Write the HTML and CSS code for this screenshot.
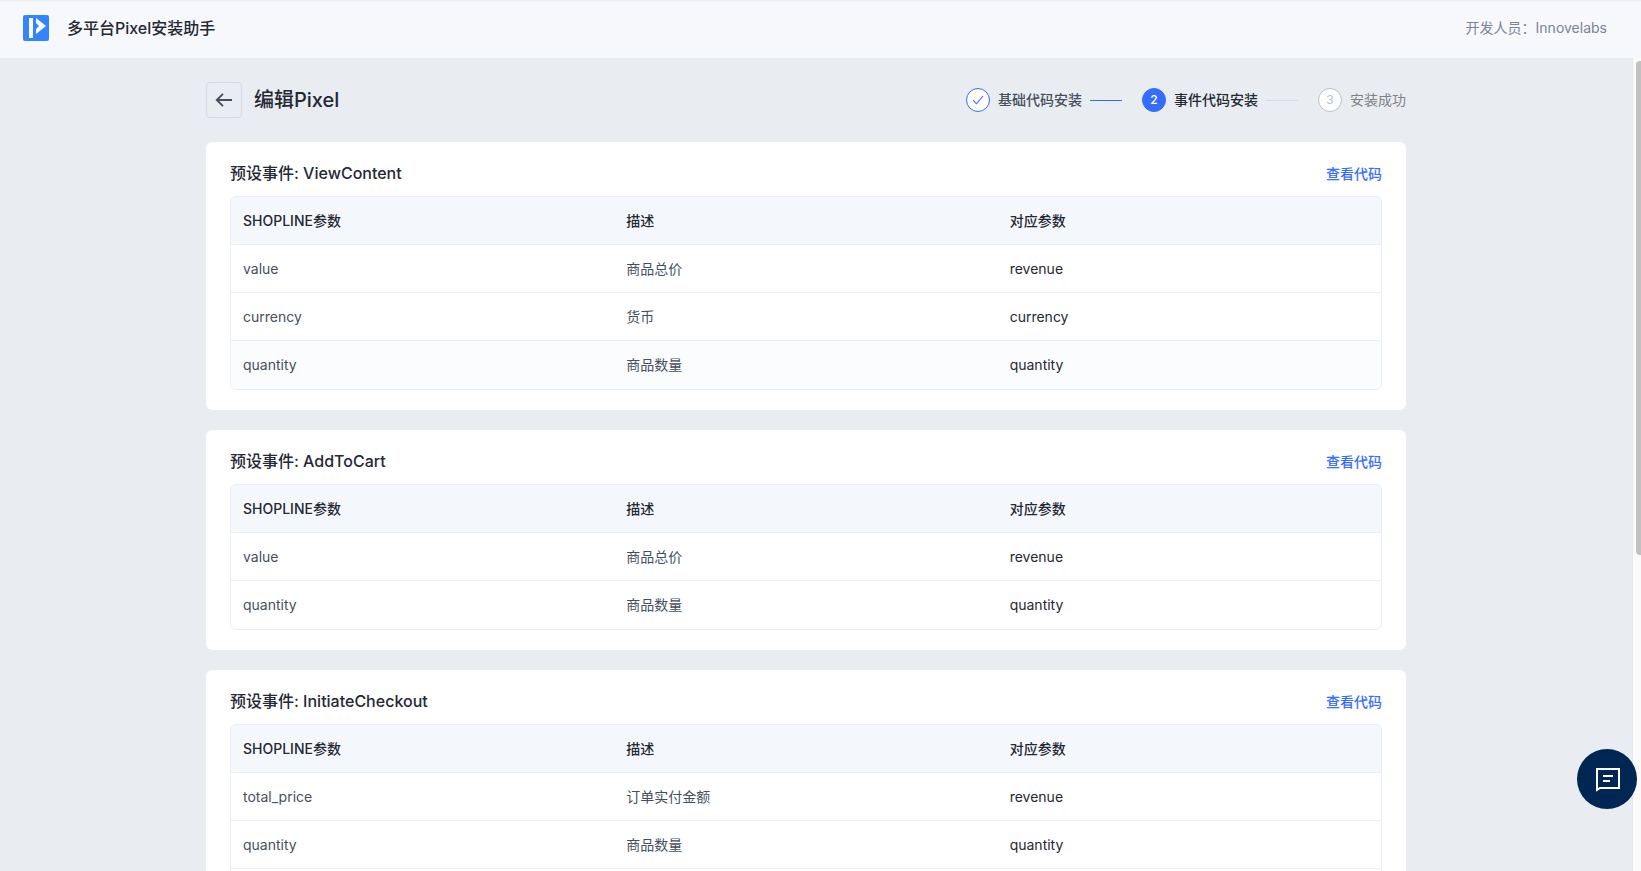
FILE: index.html
```html
<!DOCTYPE html>
<html lang="zh-CN">
<head>
    <meta charset="UTF-8">
    <meta name="viewport" content="width=device-width, initial-scale=1.0">
    <title>多平台Pixel安装助手</title>
    <link rel="stylesheet" href="styles.css">
</head>
<body>
    <header class="header">
        <svg class="logo" viewBox="0 0 26 26" aria-hidden="true">
            <rect width="26" height="26" rx="2" fill="#3385ff"/>
            <path d="M6 3h4v20H6z" fill="#fff"/>
            <path d="M13 3l10 8-10 8v-5l3-3-3-3z" fill="#fff"/>
        </svg>
        <span class="app-name">多平台Pixel安装助手</span>
        <span class="developer">开发人员：Innovelabs</span>
    </header>

    <div class="body">
        <main class="content">
            <div class="container">
                <div class="page-head">
                    <button class="back" type="button" aria-label="返回">
                        <svg viewBox="0 0 20 20" width="20" height="20">
                            <path d="M18 10H3M9 3.8L2.8 10 9 16.2" fill="none" stroke="#474f5e" stroke-width="1.9"/>
                        </svg>
                    </button>
                    <h1>编辑Pixel</h1>
                    <ol class="steps">
                        <li class="step done">
                            <span class="step-icon">
                                <svg viewBox="0 0 12 12" width="12" height="12">
                                    <path d="M1 6.2l3.4 3.6L11 2" fill="none" stroke="#356dff" stroke-width="1.1"/>
                                </svg>
                            </span>
                            <span>基础代码安装</span>
                        </li>
                        <li class="step active"><span class="step-icon">2</span><span>事件代码安装</span></li>
                        <li class="step wait"><span class="step-icon">3</span><span>安装成功</span></li>
                    </ol>
                </div>

                <section class="card">
                    <div class="card-head">
                        <h2>预设事件: ViewContent</h2>
                        <a href="#">查看代码</a>
                    </div>
                    <div class="table-box">
                        <table class="table">
                            <thead>
                                <tr><th>SHOPLINE参数</th><th>描述</th><th>对应参数</th></tr>
                            </thead>
                            <tbody>
                                <tr><td>value</td><td>商品总价</td><td>revenue</td></tr>
                                <tr><td>currency</td><td>货币</td><td>currency</td></tr>
                                <tr class="hover"><td>quantity</td><td>商品数量</td><td>quantity</td></tr>
                            </tbody>
                        </table>
                    </div>
                </section>

                <section class="card">
                    <div class="card-head">
                        <h2>预设事件: AddToCart</h2>
                        <a href="#">查看代码</a>
                    </div>
                    <div class="table-box">
                        <table class="table">
                            <thead>
                                <tr><th>SHOPLINE参数</th><th>描述</th><th>对应参数</th></tr>
                            </thead>
                            <tbody>
                                <tr><td>value</td><td>商品总价</td><td>revenue</td></tr>
                                <tr><td>quantity</td><td>商品数量</td><td>quantity</td></tr>
                            </tbody>
                        </table>
                    </div>
                </section>

                <section class="card">
                    <div class="card-head">
                        <h2>预设事件: InitiateCheckout</h2>
                        <a href="#">查看代码</a>
                    </div>
                    <div class="table-box">
                        <table class="table">
                            <thead>
                                <tr><th>SHOPLINE参数</th><th>描述</th><th>对应参数</th></tr>
                            </thead>
                            <tbody>
                                <tr><td>total_price</td><td>订单实付金额</td><td>revenue</td></tr>
                                <tr><td>quantity</td><td>商品数量</td><td>quantity</td></tr>
                                <tr><td></td><td></td><td></td></tr>
                            </tbody>
                        </table>
                    </div>
                </section>
            </div>
        </main>
        <div class="scroll-track" aria-hidden="true"><div class="scroll-thumb"></div></div>
    </div>

    <button class="chat" type="button" aria-label="在线客服">
        <svg viewBox="0 0 26 26" width="26" height="26" fill="none" stroke="#fff" stroke-width="2">
            <path d="M3 24V3h22v19H6z"/>
            <path d="M9 10h10M9 15h7"/>
        </svg>
    </button>
</body>
</html>
```
FILE: styles.css
```css
* {
    box-sizing: border-box;
}
body {
    margin: 0;
    height: 100vh;
    display: flex;
    flex-direction: column;
    font-family: Inter, "Noto Sans CJK SC", sans-serif;
    font-size: 14px;
    line-height: 22px;
    color: #242833;
    background: #e9edf2;
}
h1, h2 {
    margin: 0;
    font-weight: 500;
}
button {
    padding: 0;
    cursor: pointer;
    display: flex;
    align-items: center;
    justify-content: center;
}

.header {
    flex: none;
    height: 58px;
    padding: 0 34px 2px 23px;
    display: flex;
    align-items: center;
    background: #f7f8fc;
    box-shadow: inset 0 2px 2px -1px #e6e8ee;
}
.logo {
    width: 26px;
    height: 26px;
    margin-right: 18px;
}
.app-name {
    font-size: 16px;
    font-weight: 500;
}
.developer {
    margin-left: auto;
    color: #7a8499;
}

.body {
    flex: 1;
    min-height: 0;
    display: flex;
}
.content {
    flex: 1;
    overflow-y: auto;
    scrollbar-width: none;
    padding: 24px 20px 24px 0;
}
.container {
    max-width: 1200px;
    margin: 0 auto;
}
.scroll-track {
    width: 9px;
    padding: 3px 0 0 3px;
    overflow: hidden;
    background: #fafafa;
    border-left: 1px solid #e8e8e8;
}
.scroll-thumb {
    width: 8px;
    height: 61%;
    border-radius: 4px;
    background: #c1c1c1;
}

.page-head {
    display: flex;
    align-items: center;
    margin-bottom: 24px;
}
.back {
    width: 36px;
    height: 36px;
    margin-right: 12px;
    background: none;
    border: 1px solid #d7dbe7;
    border-radius: 4px;
}
h1 {
    font-size: 20px;
    line-height: 28px;
}

.steps {
    display: flex;
    gap: 20px;
    margin: 0 0 0 auto;
    padding: 0;
    list-style: none;
}
.step {
    display: flex;
    align-items: center;
    gap: 8px;
    font-weight: 500;
}
.step:not(:last-child)::after {
    content: "";
    width: 32px;
    height: 1px;
    background: #d7dbe7;
}
.step-icon {
    width: 24px;
    height: 24px;
    display: flex;
    align-items: center;
    justify-content: center;
    font-size: 12px;
    border: 1px solid #356dff;
    border-radius: 50%;
    background: #fff;
}
.done {
    color: #474f5e;
}
.step.done::after {
    background: #356dff;
}
.active .step-icon {
    color: #fff;
    background: #356dff;
}
.wait {
    color: #7f8287;
    font-weight: 400;
}
.wait .step-icon {
    color: #b8becc;
    border-color: #b8becc;
}

.card {
    padding: 20px 24px;
    margin-bottom: 20px;
    background: #fff;
    border-radius: 6px;
}
.card-head {
    display: flex;
    align-items: flex-start;
    justify-content: space-between;
    margin-bottom: 10px;
}
h2 {
    font-size: 16px;
    line-height: 22px;
}
.card-head a {
    color: #356dff;
    font-weight: 500;
    line-height: 24px;
    text-decoration: none;
}

.table-box {
    border: 1px solid #e8edf7;
    border-radius: 6px;
    overflow: hidden;
}
.table {
    width: 100%;
    table-layout: fixed;
    border-collapse: separate;
    border-spacing: 0;
}
.table th,
.table td {
    height: 48px;
    padding: 0 12px;
    text-align: left;
    border-bottom: 1px solid #e8edf7;
}
.table th {
    font-weight: 500;
    background: #f4f8fd;
}
.table td {
    color: #474f5e;
}
.table td:last-child {
    color: #242833;
}
.table tr:last-child td {
    border-bottom: 0;
}
.table .hover td {
    background: #fbfcfe;
}

.chat {
    position: fixed;
    right: 4px;
    bottom: 62px;
    width: 60px;
    height: 60px;
    border: 0;
    border-radius: 50%;
    background: #002753;
}
```
